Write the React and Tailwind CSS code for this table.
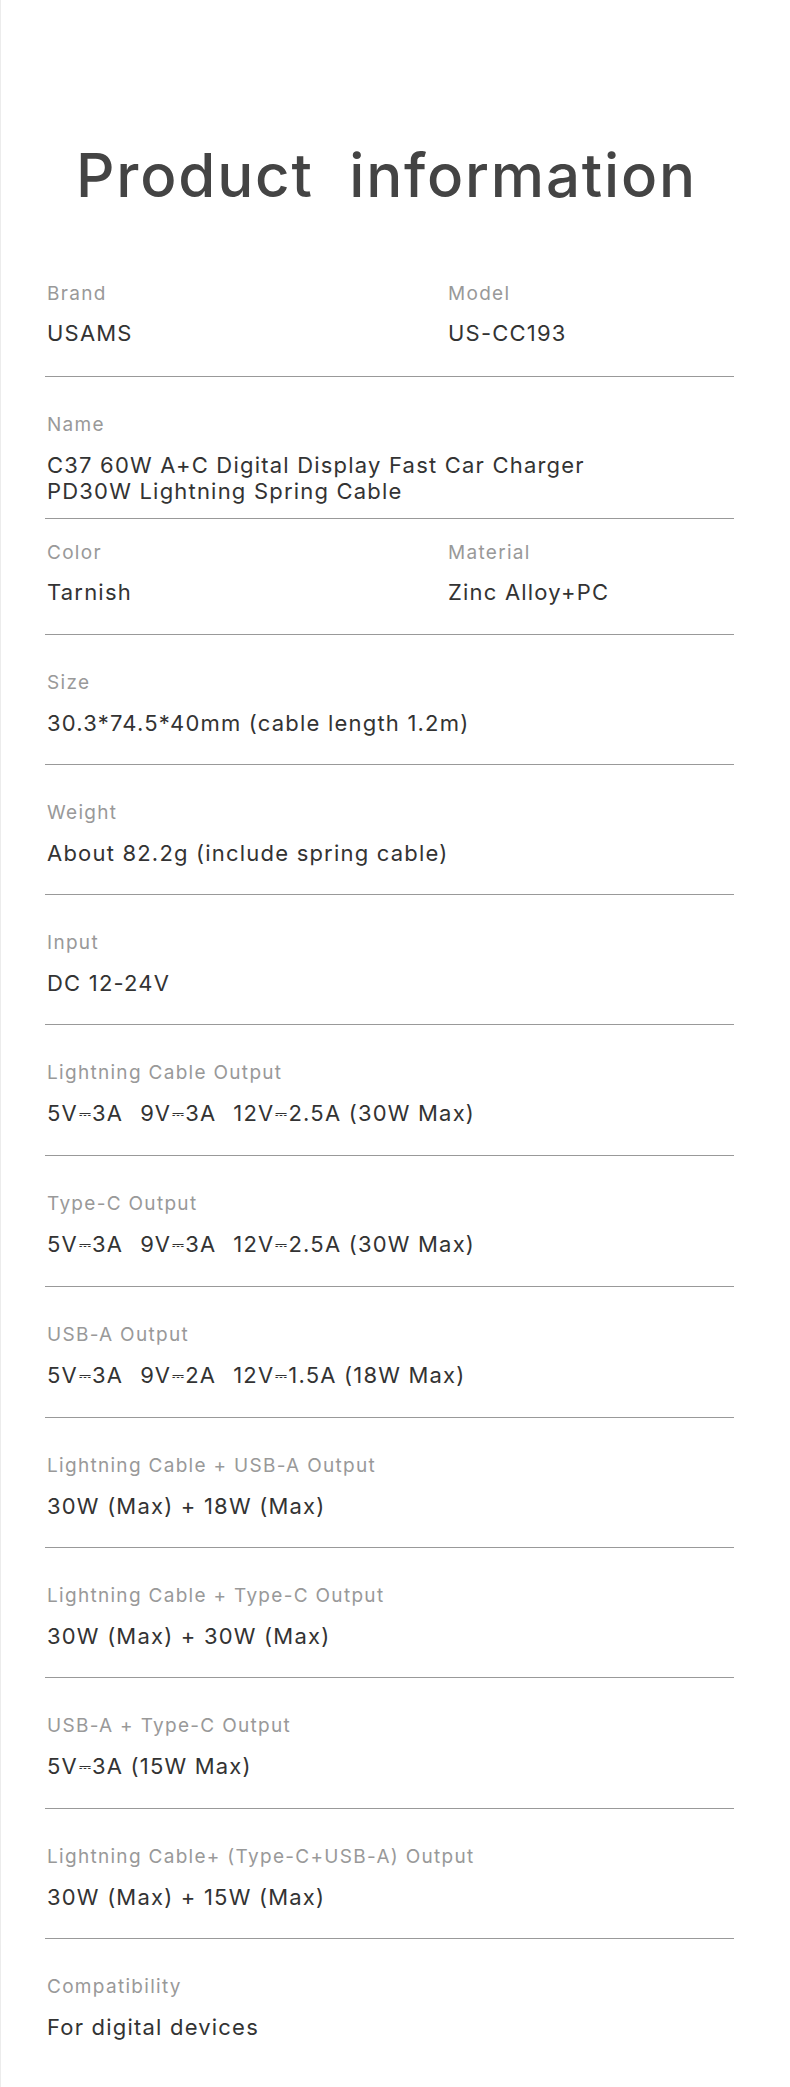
import React from "react";

const font = { fontFamily: "Inter, 'Open Sans', 'DejaVu Sans', sans-serif" };

const rows = [
  { label: "Size", value: "30.3*74.5*40mm (cable length 1.2m)" },
  { label: "Weight", value: "About 82.2g (include spring cable)" },
  { label: "Input", value: "DC 12-24V" },
  { label: "Lightning Cable Output", parts: ["5V⎓3A", "9V⎓3A", "12V⎓2.5A (30W Max)"] },
  { label: "Type-C Output", parts: ["5V⎓3A", "9V⎓3A", "12V⎓2.5A (30W Max)"] },
  { label: "USB-A Output", parts: ["5V⎓3A", "9V⎓2A", "12V⎓1.5A (18W Max)"] },
  { label: "Lightning Cable + USB-A Output", value: "30W (Max) + 18W (Max)" },
  { label: "Lightning Cable + Type-C Output", value: "30W (Max) + 30W (Max)" },
  { label: "USB-A + Type-C Output", value: "5V⎓3A (15W Max)" },
  { label: "Lightning Cable+ (Type-C+USB-A) Output", value: "30W (Max) + 15W (Max)" },
  { label: "Compatibility", value: "For digital devices", last: true },
];

// the DC symbol is drawn a size smaller, as in the picture
const Dc = ({ text }) => {
  const [a, b] = text.split("⎓");
  if (b === undefined) return text;
  return (
    <>
      {a}
      <span className="text-[15px] tracking-normal mx-[1px] align-[2px]">⎓</span>
      {b}
    </>
  );
};

const Label = ({ children }) => (
  <p className="text-[19px] leading-[24px] tracking-[1.3px] text-[#999999] pl-[2px]">
    {children}
  </p>
);

const Value = ({ children, className = "mt-[15px]" }) => (
  <div
    className={`${className} text-[22px] leading-[26px] tracking-[1.2px] text-[#333333] pl-[2px]`}
  >
    {children}
  </div>
);

const Parts = ({ parts }) => (
  <div className="flex gap-[17px]">
    {parts.map((part) => (
      <span key={part}>
        <Dc text={part} />
      </span>
    ))}
  </div>
);

const Divider = () => <div className="h-px bg-[#999999]" />;

export default function App() {
  return (
    <div
      className="w-[790px] min-h-[2087px] bg-white border-l border-[#ececec]"
      style={font}
    >
      <h1 className="pt-[130px] text-center text-[60px] leading-[90px] tracking-[1.8px] font-medium text-[#444444] whitespace-pre pr-[18px]">
        {"Product  information"}
      </h1>

      <div className="ml-[44px] w-[689px] mt-[62px]">
        {/* brand / model */}
        <div className="grid grid-cols-[401px_1fr] pb-[30px]">
          <div>
            <Label>Brand</Label>
            <Value className="mt-[14px]">USAMS</Value>
          </div>
          <div>
            <Label>Model</Label>
            <Value className="mt-[14px]">US-CC193</Value>
          </div>
        </div>
        <Divider />

        <div className="pt-[36px] pb-[14px]">
          <Label>Name</Label>
          <Value>
            C37 60W A+C Digital Display Fast Car Charger
            <br />
            PD30W Lightning Spring Cable
          </Value>
        </div>
        <Divider />

        <div className="grid grid-cols-[401px_1fr] pt-[22px] pb-[29px]">
          <div>
            <Label>Color</Label>
            <Value className="mt-[14px]">Tarnish</Value>
          </div>
          <div>
            <Label>Material</Label>
            <Value className="mt-[14px]">Zinc Alloy+PC</Value>
          </div>
        </div>
        <Divider />

        {rows.map((row) => (
          <div key={row.label}>
            <div className="pt-[36px] pb-[28px]">
              <Label>{row.label}</Label>
              <Value>
                {row.parts ? <Parts parts={row.parts} /> : <Dc text={row.value} />}
              </Value>
            </div>
            {!row.last && <Divider />}
          </div>
        ))}
      </div>
    </div>
  );
}
